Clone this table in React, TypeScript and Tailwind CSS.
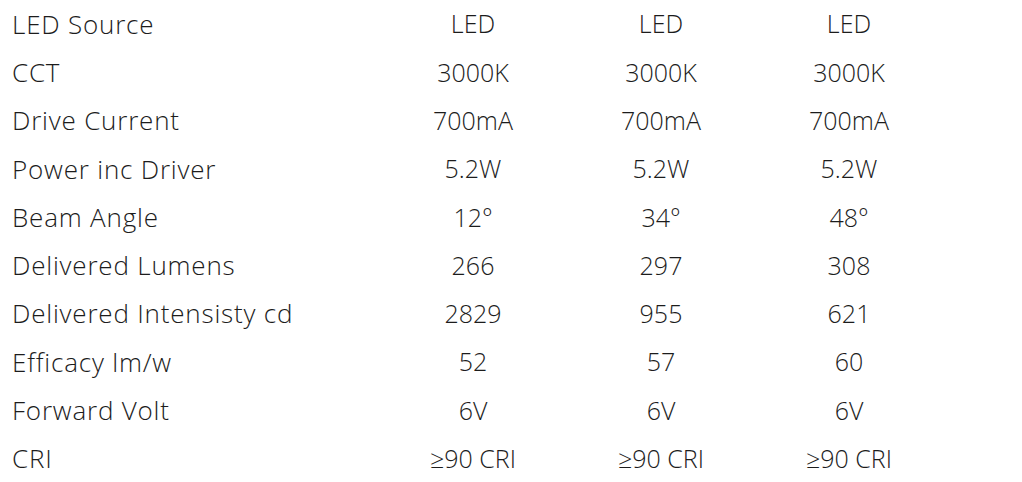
const rows: [string, string, string, string][] = [
  ["LED Source", "LED", "LED", "LED"],
  ["CCT", "3000K", "3000K", "3000K"],
  ["Drive Current", "700mA", "700mA", "700mA"],
  ["Power inc Driver", "5.2W", "5.2W", "5.2W"],
  ["Beam Angle", "12°", "34°", "48°"],
  ["Delivered Lumens", "266", "297", "308"],
  ["Delivered Intensisty cd", "2829", "955", "621"],
  ["Efficacy lm/w", "52", "57", "60"],
  ["Forward Volt", "6V", "6V", "6V"],
  ["CRI", "≥90 CRI", "≥90 CRI", "≥90 CRI"],
];

export default function App() {
  return (
    <main className="min-h-screen bg-white text-[#1c1c1c] font-['Open_Sans',sans-serif] font-light text-[26px]">
      <div className="flex flex-col">
        {rows.map(([label, a, b, c]) => (
          <div
            key={label}
            className="grid h-[48.3px] grid-cols-[379px_188px_188px_188px] items-center"
          >
            <div className="pl-3 tracking-[0.8px]">{label}</div>
            <div className="text-center text-[25px]">{a}</div>
            <div className="text-center text-[25px]">{b}</div>
            <div className="text-center text-[25px]">{c}</div>
          </div>
        ))}
      </div>
    </main>
  );
}
